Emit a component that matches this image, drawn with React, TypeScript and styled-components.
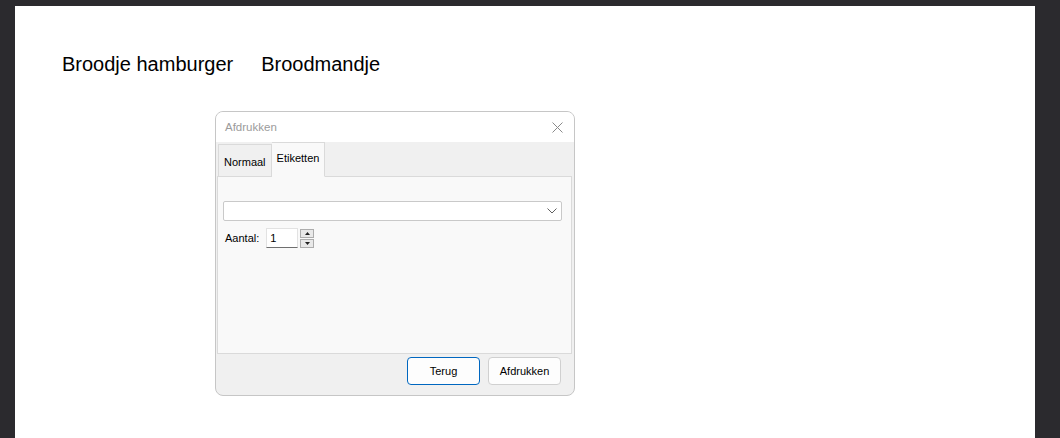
import React from 'react';
import { styled, createGlobalStyle } from 'styled-components';

const GlobalStyle = createGlobalStyle`
  html, body {
    margin: 0;
    padding: 0;
    background: #2b2a2e;
    height: 100%;
    overflow: hidden;
  }
`;

const Page = styled.div`
  margin: 6px 25px 0 15px;
  height: 432px;
  background: #ffffff;
  padding: 47px 0 0 47px;
  box-sizing: border-box;
`;

const Headline = styled.div`
  display: flex;
  gap: 28px;
  font-family: 'Liberation Sans', Arial, sans-serif;
  font-size: 20px;
  line-height: 23px;
  color: #000;
`;

const Dialog = styled.div`
  margin: 35px 0 0 153px;
  width: 360px;
  height: 285px;
  box-sizing: border-box;
  border: 1px solid #c6c6c6;
  border-radius: 8px;
  overflow: hidden;
  background: #f0f0f0;
  display: flex;
  flex-direction: column;
  font-family: 'Liberation Sans', Arial, sans-serif;
  font-size: 11px;
  color: #000;
`;

const TitleBar = styled.div`
  height: 30px;
  background: #ffffff;
  display: flex;
  align-items: center;
  justify-content: space-between;
  padding: 0 11px 0 9px;
`;

const Title = styled.span`
  color: #9b9b9b;
  font-size: 11.5px;
`;

const TabStrip = styled.div`
  height: 34px;
  display: flex;
  align-items: flex-end;
  padding-left: 2px;
`;

const Tab = styled.div<{ $active?: boolean }>`
  box-sizing: border-box;
  height: ${(p) => (p.$active ? 35 : 33)}px;
  padding: ${(p) => (p.$active ? '9px 5px 0 5px' : '11px 5px 0 5px')};
  margin-bottom: -1px;
  background: ${(p) => (p.$active ? '#f9f9f9' : '#f0f0f0')};
  border: 1px solid #dadada;
  border-bottom: ${(p) => (p.$active ? '1px solid #f9f9f9' : '1px solid #dadada')};
  border-left: ${(p) => (p.$active ? 'none' : '1px solid #dadada')};
  position: relative;
  z-index: ${(p) => (p.$active ? 1 : 0)};
`;

const Panel = styled.div`
  flex: 1;
  margin: 0 2px 0 1px;
  background: #f9f9f9;
  border: 1px solid #dadada;
  padding: 24px 9px 0 5px;
  display: flex;
  flex-direction: column;
  gap: 7px;
`;

const Select = styled.div`
  height: 20px;
  box-sizing: border-box;
  background: #ffffff;
  border: 1px solid #c9c9c9;
  border-radius: 2px;
  display: flex;
  align-items: center;
  justify-content: flex-end;
  padding-right: 4px;
`;

const Row = styled.div`
  display: flex;
  align-items: center;
  padding-left: 2px;
`;

const Label = styled.span`
  margin-right: 7px;
`;

const NumberBox = styled.div`
  width: 32px;
  height: 20px;
  box-sizing: border-box;
  background: #ffffff;
  border: 1px solid #e2e2e2;
  border-bottom: 1px solid #6f6f6f;
  padding: 3px 0 0 3px;
`;

const Spinner = styled.div`
  display: flex;
  flex-direction: column;
  gap: 1px;
  margin-left: 2px;
`;

const SpinButton = styled.div`
  width: 14px;
  height: 9px;
  box-sizing: border-box;
  border: 1px solid #adadad;
  background: #e9e9e9;
  display: flex;
  align-items: center;
  justify-content: center;
`;

const Footer = styled.div`
  height: 41px;
  box-sizing: border-box;
  display: flex;
  align-items: flex-start;
  justify-content: flex-end;
  gap: 8px;
  padding: 3px 13px 0 0;
`;

const Button = styled.button<{ $primary?: boolean }>`
  width: 73px;
  height: 28px;
  box-sizing: border-box;
  font-family: 'Liberation Sans', Arial, sans-serif;
  font-size: 11px;
  color: #000;
  background: #fdfdfd;
  border: 1px solid ${(p) => (p.$primary ? '#0067c0' : '#d0d0d0')};
  border-radius: 4px;
  padding: 0;
`;

const Close = () => (
  <svg width="11" height="11" viewBox="0 0 11 11">
    <path d="M0.5 0.5 L10.5 10.5 M10.5 0.5 L0.5 10.5" stroke="#8a8a8a" strokeWidth="1" fill="none" />
  </svg>
);

const Chevron = () => (
  <svg width="10" height="6" viewBox="0 0 10 6">
    <path d="M0.5 0.5 L5 5 L9.5 0.5" stroke="#606060" strokeWidth="1" fill="none" />
  </svg>
);

const Tri = ({ up }: { up?: boolean }) => (
  <svg width="5" height="3" viewBox="0 0 5 3">
    <path d={up ? 'M0 3 L2.5 0 L5 3 Z' : 'M0 0 L2.5 3 L5 0 Z'} fill="#222" />
  </svg>
);

const App = () => {
  return (
    <>
      <GlobalStyle />
      <Page>
        <Headline>
          <span>Broodje hamburger</span>
          <span>Broodmandje</span>
        </Headline>
        <Dialog>
          <TitleBar>
            <Title>Afdrukken</Title>
            <Close />
          </TitleBar>
          <TabStrip>
            <Tab>Normaal</Tab>
            <Tab $active>Etiketten</Tab>
          </TabStrip>
          <Panel>
            <Select>
              <Chevron />
            </Select>
            <Row>
              <Label>Aantal:</Label>
              <NumberBox>1</NumberBox>
              <Spinner>
                <SpinButton>
                  <Tri up />
                </SpinButton>
                <SpinButton>
                  <Tri />
                </SpinButton>
              </Spinner>
            </Row>
          </Panel>
          <Footer>
            <Button $primary>Terug</Button>
            <Button>Afdrukken</Button>
          </Footer>
        </Dialog>
      </Page>
    </>
  );
};

export default App;
